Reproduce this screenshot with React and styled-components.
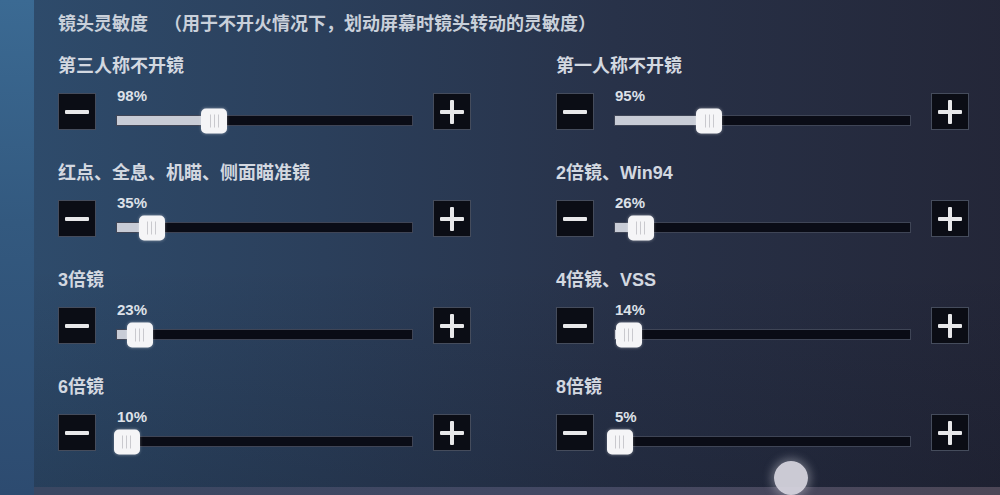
import styled, { createGlobalStyle } from 'styled-components'

const GlobalStyle = createGlobalStyle`
  html, body {
    margin: 0;
    padding: 0;
    background: #24283a;
  }
  body {
    font-family: "Noto Sans CJK SC", "Noto Sans", sans-serif;
    color: #d6dbe3;
  }
`

const MAX_PCT = 300
const TRACK_WIDTH = 297

const sliders = [
  { label: '第三人称不开镜', value: 98 },
  { label: '第一人称不开镜', value: 95 },
  { label: '红点、全息、机瞄、侧面瞄准镜', value: 35 },
  { label: '2倍镜、Win94', value: 26 },
  { label: '3倍镜', value: 23 },
  { label: '4倍镜、VSS', value: 14 },
  { label: '6倍镜', value: 10 },
  { label: '8倍镜', value: 5 },
]

const Screen = styled.div`
  position: relative;
  display: flex;
  width: 1000px;
  height: 495px;
  overflow: hidden;
`

const Sidebar = styled.div`
  width: 34px;
  flex-shrink: 0;
  background: linear-gradient(180deg, #3b6a93 0%, #33597f 45%, #2d4b70 100%);
`

const Main = styled.div`
  flex: 1;
  display: flex;
  flex-direction: column;
`

const Panel = styled.div`
  height: 487px;
  box-sizing: border-box;
  padding: 10px 0 0 24px;
  background:
    linear-gradient(180deg, rgba(0, 0, 0, 0) 55%, rgba(8, 10, 20, 0.18) 100%),
    linear-gradient(90deg, #2e4b6b 0%, #2b3f5b 30%, #283249 60%, #23263666 100%),
    #24273a;
`

const BottomStrip = styled.div`
  flex: 1;
  background: linear-gradient(90deg, #3a4762 0%, #434863 55%, #4d4757 100%);
`

const Title = styled.div`
  display: flex;
  gap: 16px;
  font-size: 18px;
  line-height: 24px;
  font-weight: 700;
  color: #c9d0da;
`

const Grid = styled.div`
  display: grid;
  grid-template-columns: 498px auto;
  row-gap: 31px;
  margin-top: 20px;
`

const Cell = styled.div`
  display: flex;
  flex-direction: column;
`

const Label = styled.div`
  font-size: 18px;
  line-height: 24px;
  font-weight: 700;
  color: #d3d8e0;
  font-family: "Liberation Sans", "Noto Sans CJK SC", sans-serif;
`

const Controls = styled.div`
  display: flex;
  align-items: flex-start;
  gap: 20px;
  margin-top: 15px;
`

const StepButton = styled.div`
  position: relative;
  width: 38px;
  height: 37px;
  box-sizing: border-box;
  background: #0b0d15;
  border: 1px solid #454c5c;
  display: flex;
  align-items: center;
  justify-content: center;
`

const Bar = styled.span`
  position: absolute;
  background: #e8e8ea;
  border-radius: 1px;
  width: ${p => (p.$vertical ? '4px' : '24px')};
  height: ${p => (p.$vertical ? '24px' : '4px')};
`

const SliderArea = styled.div`
  width: ${TRACK_WIDTH}px;
  display: flex;
  flex-direction: column;
  margin-top: -4px;
`

const Percent = styled.div`
  font-family: "Liberation Sans", sans-serif;
  font-size: 15px;
  line-height: 14px;
  font-weight: 700;
  color: #dde1e8;
  padding-left: 1px;
`

const Track = styled.div`
  position: relative;
  height: 11px;
  margin-top: 12px;
  box-sizing: border-box;
  background: #0a0c16;
  border: 1px solid #3f4556;
`

const Fill = styled.div`
  height: 100%;
  background: #c8ccd6;
`

const Thumb = styled.div`
  position: absolute;
  top: 50%;
  width: 26px;
  height: 25px;
  margin-left: -13px;
  transform: translateY(-50%);
  border-radius: 5px;
  background: #f5f5f7;
  box-shadow: 0 0 3px rgba(255, 255, 255, 0.35);
  display: flex;
  align-items: center;
  justify-content: center;
  gap: 3px;
`

const Groove = styled.span`
  width: 1px;
  height: 13px;
  background: #c9c9ce;
`

const TouchDot = styled.div`
  position: absolute;
  left: 774px;
  top: 461px;
  width: 34px;
  height: 34px;
  border-radius: 50%;
  background: rgba(218, 216, 226, 0.92);
  box-shadow: 0 0 8px 3px rgba(220, 220, 230, 0.35);
`

function Slider({ label, value }) {
  const pos = (value / MAX_PCT) * TRACK_WIDTH
  return (
    <Cell>
      <Label>{label}</Label>
      <Controls>
        <StepButton>
          <Bar />
        </StepButton>
        <SliderArea>
          <Percent>{value}%</Percent>
          <Track>
            <Fill style={{ width: pos }} />
            <Thumb style={{ left: pos }}>
              <Groove />
              <Groove />
              <Groove />
            </Thumb>
          </Track>
        </SliderArea>
        <StepButton>
          <Bar />
          <Bar $vertical />
        </StepButton>
      </Controls>
    </Cell>
  )
}

export default function App() {
  return (
    <>
      <GlobalStyle />
      <Screen>
        <Sidebar />
        <Main>
          <Panel>
            <Title>
              <span>镜头灵敏度</span>
              <span>（用于不开火情况下，划动屏幕时镜头转动的灵敏度）</span>
            </Title>
            <Grid>
              {sliders.map(s => (
                <Slider key={s.label} label={s.label} value={s.value} />
              ))}
            </Grid>
          </Panel>
          <BottomStrip />
        </Main>
        <TouchDot />
      </Screen>
    </>
  )
}
